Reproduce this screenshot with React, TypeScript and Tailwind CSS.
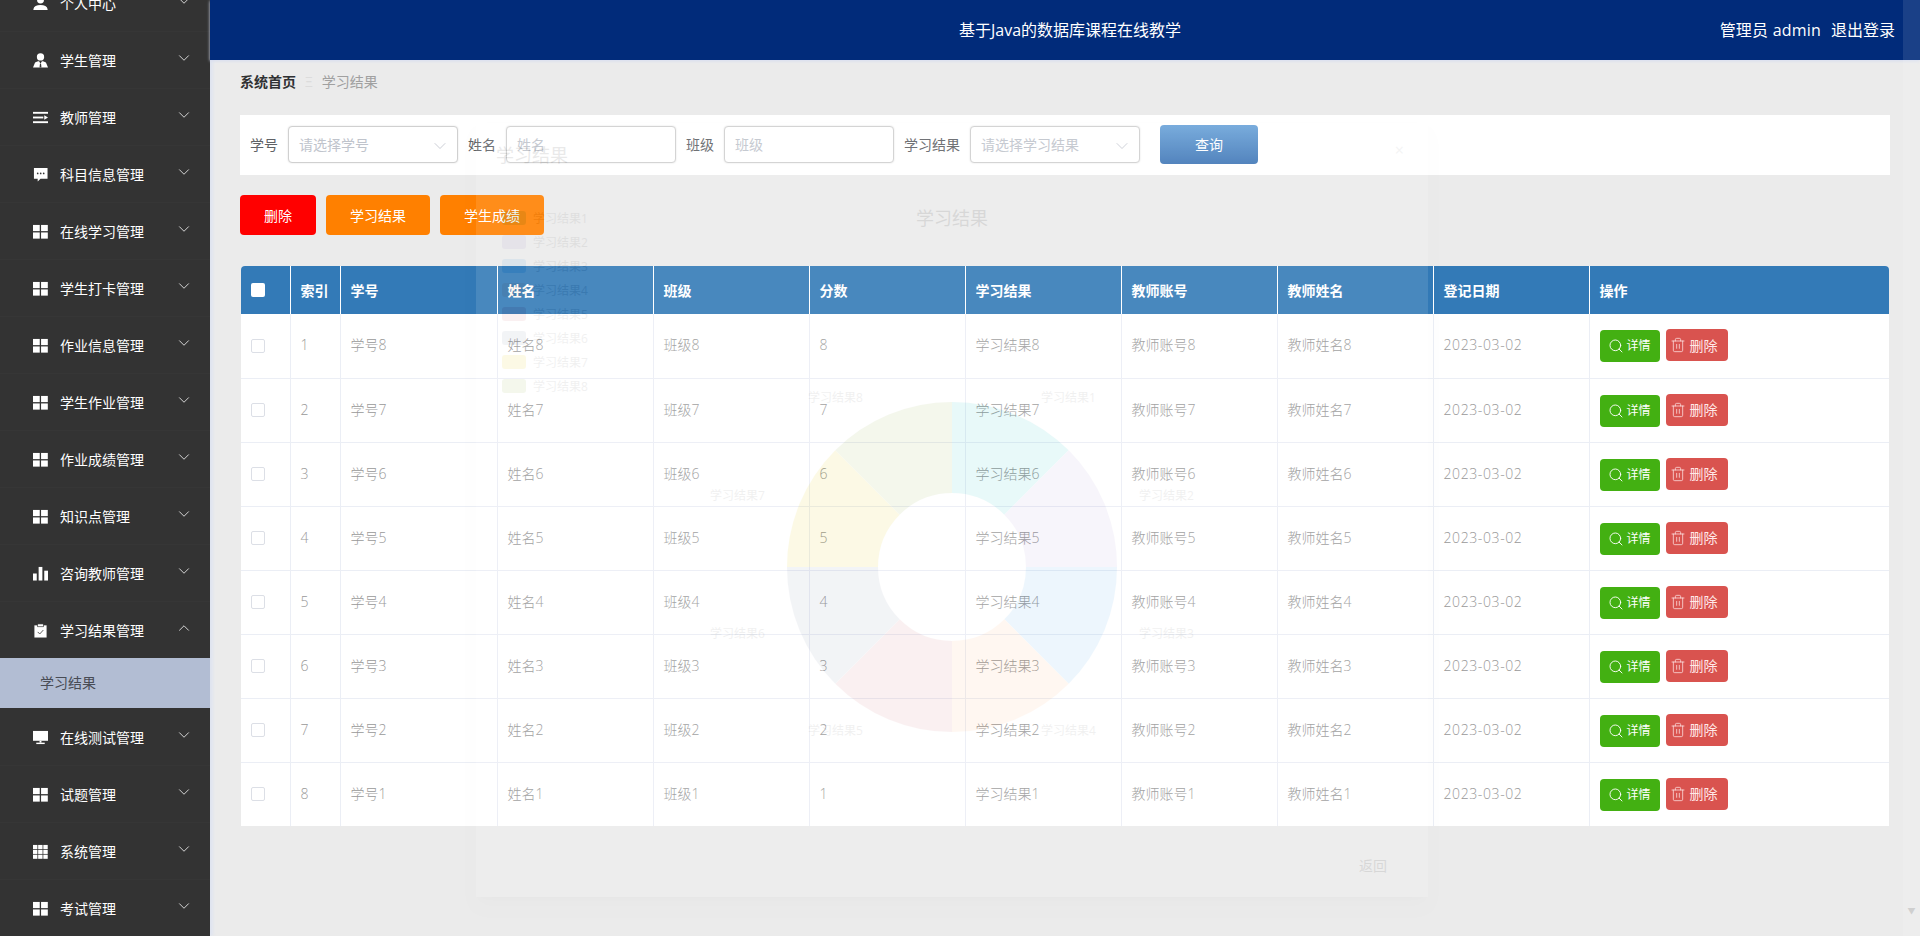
import React from 'react';
import { Search, Trash2, ChevronDown, ChevronUp } from 'lucide-react';

const FONT = '"Open Sans", "Noto Sans CJK SC", sans-serif';

const UserIcon = () => (
  <svg viewBox="0 0 16 16" className="w-[15px] h-[15px] fill-white">
    <circle cx="8" cy="4.2" r="3.7" />
    <path d="M1 15c-.5 0-.7-.4-.6-1 .5-3 3.300-4.500 7.600-4.500s7.100 1.500 7.600 4.500c.1.600-.1 1-.6 1z" />
  </svg>
);
const CustomIcon = () => (
  <svg viewBox="0 0 16 16" className="w-[15px] h-[15px] fill-white">
    <circle cx="8" cy="4.200" r="3.900" />
    <path d="M0 15.500 2.200 10c1.500-.8 3.300-1.200 4.300-1.200L8 11.500l1.500-2.700c1 0 2.800.4 4.300 1.200l2.200 5.500z" />
    <path d="M7.400 11.500h1.200l.4 4H7z" fill="#333333" />
  </svg>
);
const UnfoldIcon = () => (
  <svg viewBox="0 0 16 16" className="w-[15px] h-[15px] fill-white">
    <rect x="0" y="2" width="16" height="2" />
    <rect x="0" y="7" width="11" height="2" />
    <path d="M12 5.500 16 8l-4 2.500z" />
    <rect x="0" y="12" width="16" height="2" />
  </svg>
);
const ChatIcon = () => (
  <svg viewBox="0 0 16 16" className="w-[15px] h-[15px] fill-white">
    <path d="M1 1h14.500v11.500H8L5 15.500v-3H1z" />
    <circle cx="5" cy="6.800" r=".9" fill="#333333" />
    <circle cx="8.200" cy="6.800" r=".9" fill="#333333" />
    <circle cx="11.400" cy="6.800" r=".9" fill="#333333" />
  </svg>
);
const MenuIcon = () => (
  <svg viewBox="0 0 16 16" className="w-[15px] h-[15px] fill-white">
    <rect x="0" y="1" width="7.200" height="6.600" />
    <rect x="8.600" y="1" width="7.200" height="6.600" />
    <rect x="0" y="9" width="7.200" height="6.600" />
    <rect x="8.600" y="9" width="7.200" height="6.600" />
  </svg>
);
const GridIcon = () => (
  <svg viewBox="0 0 16 16" className="w-[15px] h-[15px] fill-white">
    {[0, 5.500, 11].map((x) =>
      [1, 6.200, 11.400].map((y) => <rect key={`${x}-${y}`} x={x} y={y} width="4.700" height="4.400" />)
    )}
  </svg>
);
const BarsIcon = () => (
  <svg viewBox="0 0 16 16" className="w-[15px] h-[15px] fill-white">
    <rect x="0" y="8" width="4" height="7.500" />
    <rect x="6" y="1" width="4" height="14.500" />
    <rect x="12" y="5" width="4" height="10.500" />
  </svg>
);
const ClaimIcon = () => (
  <svg viewBox="0 0 16 16" className="w-[15px] h-[15px]">
    <path d="M1.500 2.500h13v13h-13z" fill="#ffffff" />
    <rect x="5" y="1" width="6" height="3" fill="#ffffff" stroke="#333333" strokeWidth=".7" />
    <path d="m5 9.500 2.200 2.200L11 7.500" fill="none" stroke="#555555" strokeWidth="1" />
  </svg>
);
const ScreenIcon = () => (
  <svg viewBox="0 0 16 16" className="w-[15px] h-[15px] fill-white">
    <rect x="0" y="1" width="16" height="10.500" />
    <rect x="7" y="11.500" width="2" height="2" />
    <rect x="3.500" y="13.500" width="9" height="1.500" />
  </svg>
);

const menus = [
  { name: '个人中心', icon: <UserIcon /> },
  { name: '学生管理', icon: <CustomIcon /> },
  { name: '教师管理', icon: <UnfoldIcon /> },
  { name: '科目信息管理', icon: <ChatIcon /> },
  { name: '在线学习管理', icon: <MenuIcon /> },
  { name: '学生打卡管理', icon: <MenuIcon /> },
  { name: '作业信息管理', icon: <MenuIcon /> },
  { name: '学生作业管理', icon: <MenuIcon /> },
  { name: '作业成绩管理', icon: <MenuIcon /> },
  { name: '知识点管理', icon: <MenuIcon /> },
  { name: '咨询教师管理', icon: <BarsIcon /> },
  { name: '学习结果管理', icon: <ClaimIcon />, open: true },
  { name: '在线测试管理', icon: <ScreenIcon /> },
  { name: '试题管理', icon: <MenuIcon /> },
  { name: '系统管理', icon: <GridIcon /> },
  { name: '考试管理', icon: <MenuIcon /> },
];

const columns = ['索引', '学号', '姓名', '班级', '分数', '学习结果', '教师账号', '教师姓名', '登记日期', '操作'];

const rows = [8, 7, 6, 5, 4, 3, 2, 1];

const pieColors = ['#2ec7c9', '#b6a2de', '#5ab1ef', '#ffb980', '#d87a80', '#8d98b3', '#e5cf0d', '#97b552'];

const pieLabels = [
  { text: '学习结果1', x: 1041, y: 398 },
  { text: '学习结果2', x: 1139, y: 496 },
  { text: '学习结果3', x: 1139, y: 634 },
  { text: '学习结果4', x: 1041, y: 731 },
  { text: '学习结果5', x: 808, y: 731 },
  { text: '学习结果6', x: 710, y: 634 },
  { text: '学习结果7', x: 710, y: 496 },
  { text: '学习结果8', x: 808, y: 398 },
];

// donut slice, angles in degrees clockwise from the top
const slicePath = (cx: number, cy: number, r: number, r0: number, from: number, to: number) => {
  const pt = (rad: number, deg: number) => {
    const a = ((deg - 90) * Math.PI) / 180;
    return `${(cx + rad * Math.cos(a)).toFixed(2)} ${(cy + rad * Math.sin(a)).toFixed(2)}`;
  };
  return `M${pt(r, from)}A${r} ${r} 0 0 1 ${pt(r, to)}L${pt(r0, to)}A${r0} ${r0} 0 0 0 ${pt(r0, from)}Z`;
};

const Sidebar = () => (
  <aside className="w-[210px] shrink-0 bg-[#333333] overflow-hidden z-10 shadow-[3px_0_3px_#dfe4f0]">
    <div className="-mt-[25px]">
      {menus.map((m) => (
        <div key={m.name}>
          <div className="h-[57px] flex items-center pl-[33px] pr-[17px] text-white text-[14px] border-b border-[#363636]">
            <span className="w-[15px] h-[15px] mr-[12px] flex items-center justify-center">{m.icon}</span>
            <span className="flex-1">{m.name}</span>
            {m.open ? (
              <ChevronUp className="w-[18px] h-[18px] -mt-[5px] text-[#e5e5e5]" strokeWidth={1.2} />
            ) : (
              <ChevronDown className="w-[18px] h-[18px] -mt-[5px] text-[#e5e5e5]" strokeWidth={1.2} />
            )}
          </div>
          {m.open && (
            <div className="h-[50px] -mt-px mb-px pb-[2px] flex items-center pl-[40px] bg-[#b2bdd3] text-[14px] text-[#484c55]">
              学习结果
            </div>
          )}
        </div>
      ))}
    </div>
  </aside>
);

const Select = ({ placeholder }: { placeholder: string }) => (
  <div className="w-[170px] h-[37px] flex items-center justify-between pl-[10px] pr-[7px] bg-white border border-[#d0d0d0] rounded-[4px] text-[14px] text-[#c0c4cc] shadow-[0_0_2px_rgba(0,0,0,0.12)]">
    <span>{placeholder}</span>
    <ChevronDown className="w-[20px] h-[20px] mt-[2px] text-[#c0c4cc]" strokeWidth={1} />
  </div>
);

const Input = ({ placeholder }: { placeholder: string }) => (
  <div className="w-[170px] h-[37px] flex items-center pl-[10px] bg-white border border-[#d0d0d0] rounded-[4px] text-[14px] text-[#c0c4cc] shadow-[0_0_2px_rgba(0,0,0,0.12)]">
    {placeholder}
  </div>
);

const SearchBar = () => (
  <div className="h-[60px] pb-px bg-white flex items-center pl-[10px] text-[14px] text-[#606266]">
    <span className="mr-[10px]">学号</span>
    <Select placeholder="请选择学号" />
    <span className="ml-[10px] mr-[10px]">姓名</span>
    <Input placeholder="姓名" />
    <span className="ml-[10px] mr-[10px]">班级</span>
    <Input placeholder="班级" />
    <span className="ml-[10px] mr-[10px]">学习结果</span>
    <Select placeholder="请选择学习结果" />
    <button className="ml-[20px] w-[98px] h-[39px] rounded-[4px] bg-gradient-to-b from-[#6aa3d9] to-[#3f76b6] text-white text-[14px]">
      查询
    </button>
  </div>
);

const cell = 'border-r border-[#ebeef5] pl-[10px] pb-[2px]';

const Table = () => (
  <table className="mx-px mt-[31px] w-[1648px] table-fixed border-collapse bg-white text-[14px] rounded-t-[4px] overflow-hidden">
    <colgroup>
      <col className="w-[49px]" />
      <col className="w-[50px]" />
      <col className="w-[157px]" />
      <col className="w-[156px]" />
      <col className="w-[156px]" />
      <col className="w-[156px]" />
      <col className="w-[156px]" />
      <col className="w-[156px]" />
      <col className="w-[156px]" />
      <col className="w-[156px]" />
      <col />
    </colgroup>
    <thead>
      <tr className="h-[48px] bg-[#337ab7] text-white">
        <th className="border-r border-white pl-[10px] text-left">
          <span className="block w-[14px] h-[14px] bg-white rounded-[2px]" />
        </th>
        {columns.map((c, i) => (
          <th
            key={c}
            className={`pl-[10px] text-left font-bold ${i < columns.length - 1 ? 'border-r border-white' : ''}`}
          >
            {c}
          </th>
        ))}
      </tr>
    </thead>
    <tbody className="text-[#999999] font-light">
      {rows.map((n, i) => (
        <tr key={n} className="h-[64px] border-b border-[#ebeef5] last:border-b-0">
          <td className="border-r border-[#ebeef5] pl-[10px]">
            <span className="block w-[14px] h-[14px] border border-[#dcdfe6] rounded-[2px]" />
          </td>
          <td className={cell}>{i + 1}</td>
          <td className={cell}>学号{n}</td>
          <td className={cell}>姓名{n}</td>
          <td className={cell}>班级{n}</td>
          <td className={cell}>{n}</td>
          <td className={cell}>学习结果{n}</td>
          <td className={cell}>教师账号{n}</td>
          <td className={cell}>教师姓名{n}</td>
          <td className={`${cell} tracking-[0.6px]`}>2023-03-02</td>
          <td className="pl-[10px]">
            <div className="flex items-start gap-[6px] font-normal">
              <button className="mt-px w-[60px] h-[32px] flex items-center justify-center gap-[2px] rounded-[4px] bg-[#43b012] text-white text-[12px]">
                <Search className="w-[16px] h-[16px]" strokeWidth={1.4} />
                详情
              </button>
              <button className="w-[62px] h-[32px] flex items-center pl-[4px] gap-[4px] rounded-[4px] bg-[#d9534f] text-[#ffe9e9] text-[14px]">
                <Trash2 className="w-[16px] h-[16px]" strokeWidth={1.1} />
                删除
              </button>
            </div>
          </td>
        </tr>
      ))}
    </tbody>
  </table>
);

// dialog caught while fading out, drawn over the page
const FadingDialog = () => (
  <div className="absolute left-[476px] top-[123px] w-[952px] h-[774px] bg-white opacity-10 pointer-events-none z-20 flex flex-col text-[#303133] shadow-lg">
    <div className="h-[64px] flex items-start justify-between px-[20px] pt-[20px]">
      <span className="text-[18px] leading-[24px]">学习结果</span>
      <span className="text-[16px] mr-[4px] -mt-[5px] text-[#909399]">×</span>
    </div>
    <svg viewBox="476 187 952 620" className="w-[952px] h-[620px]">
      <text x="952" y="225" textAnchor="middle" fontSize="18" fill="#333333">
        学习结果
      </text>
      {pieColors.map((color, i) => (
        <g key={color}>
          <rect x="502" y={211 + i * 24} width="24" height="14" rx="3" fill={color} />
          <text x="533" y={223 + i * 24} fontSize="12" fill="#777777">
            学习结果{i + 1}
          </text>
          <path d={slicePath(952, 567, 165, 74, i * 45, (i + 1) * 45)} fill={color} />
        </g>
      ))}
      {pieLabels.map((l) => (
        <text key={l.text} x={l.x} y={l.y + 4} fontSize="12" fill="#777777">
          {l.text}
        </text>
      ))}
    </svg>
    <div className="flex-1 flex justify-end pr-[41px] pt-[48px] text-[14px]">返回</div>
  </div>
);

const App: React.FC = () => {
  return (
    <div className="relative flex h-[936px] overflow-hidden bg-[#ebebeb]" style={{ fontFamily: FONT }}>
      <Sidebar />
      <main className="flex-1 min-w-0">
        <header className="relative z-[11] h-[60px] bg-[#012b7a] flex items-center justify-between pl-[749px] pr-[25px] text-white shadow-[0_1px_3px_#d5dcf0]">
          <span className="text-[16px]">基于Java的数据库课程在线教学</span>
          <div className="flex gap-[10px] text-[16px]">
            <span className="tracking-[0.2px]">管理员 admin</span>
            <span>退出登录</span>
          </div>
        </header>
        <div className="px-[30px]">
          <div className="h-[42px] mb-[13px] flex items-center text-[14px]">
            <span className="font-bold text-[#303133]">系统首页</span>
            <span className="mx-[9px] text-[#dcdcdc]">Ξ</span>
            <span className="text-[#a0a0a0]">学习结果</span>
          </div>
          <SearchBar />
          <div className="mt-[20px] flex gap-[10px] text-white text-[14px]">
            <button className="w-[76px] h-[40px] rounded-[4px] bg-[#ff0000]">删除</button>
            <button className="w-[104px] h-[40px] rounded-[4px] bg-[#ff8000]">学习结果</button>
            <button className="w-[104px] h-[40px] rounded-[4px] bg-[#ff8000]">学生成绩</button>
          </div>
          <Table />
        </div>
      </main>
      <FadingDialog />
      {/* scrollbar track of the page underneath */}
      <div className="absolute right-0 top-0 w-[17px] h-full bg-white/10 z-30 flex justify-center">
        <span className="absolute top-[905px] text-[8px] text-[#cfcfcf]">▼</span>
      </div>
    </div>
  );
};

export default App;
